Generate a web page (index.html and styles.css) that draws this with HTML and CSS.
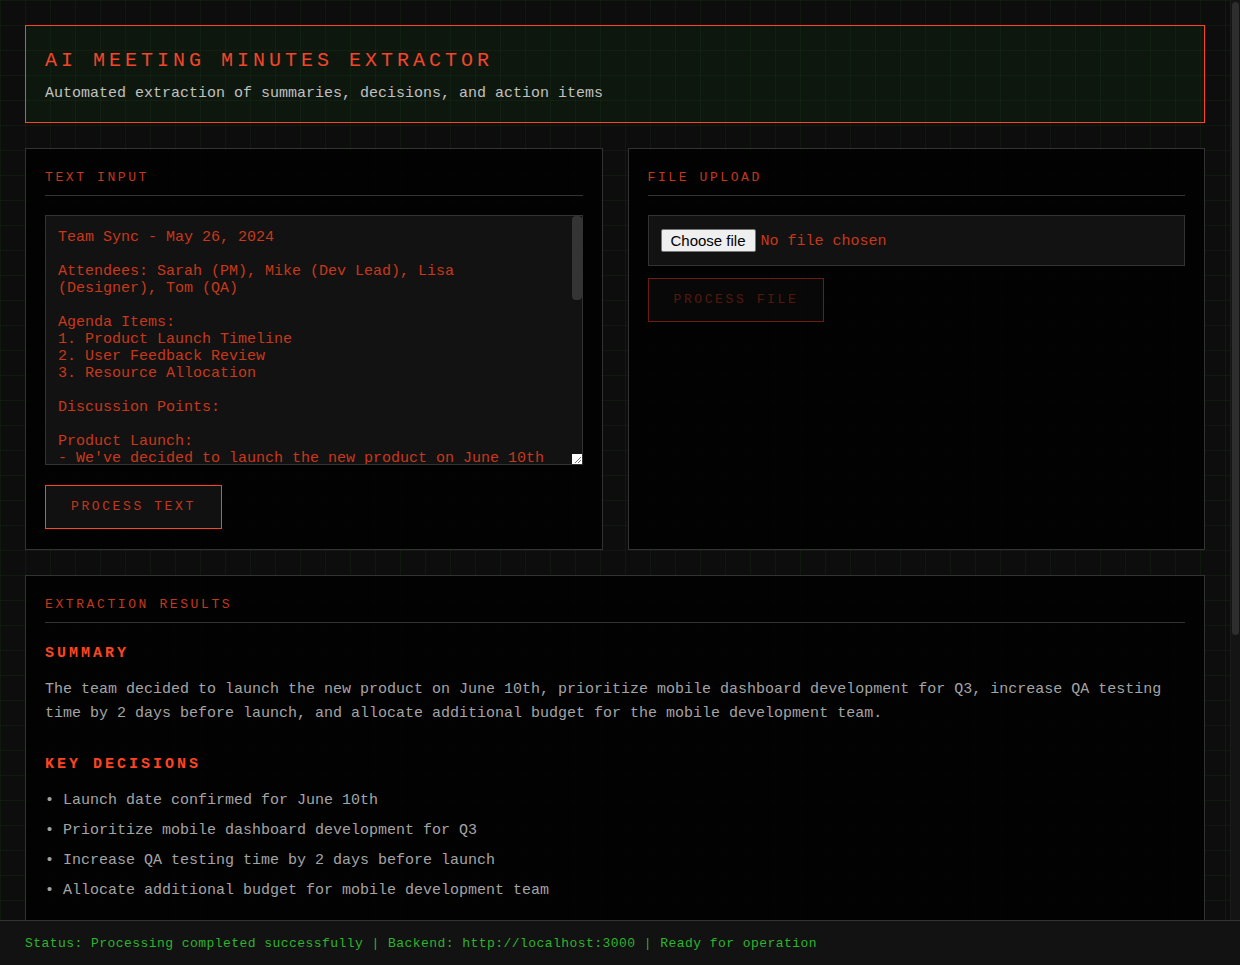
FILE: index.html
```html
<!DOCTYPE html>
<html lang="en">
<head>
<meta charset="utf-8">
<title>AI Meeting Minutes Extractor</title>
<link rel="stylesheet" href="styles.css">
</head>
<body>
<div class="app">
  <div class="viewport">
    <main class="main">
      <header class="hero">
        <h1 class="hero-title">AI MEETING MINUTES EXTRACTOR</h1>
        <p class="hero-sub">Automated extraction of summaries, decisions, and action items</p>
      </header>

      <section class="inputs">
        <div class="panel">
          <h2 class="panel-title">TEXT INPUT</h2>
          <div class="notes-wrap">
            <textarea class="notes" spellcheck="false">Team Sync - May 26, 2024

Attendees: Sarah (PM), Mike (Dev Lead), Lisa (Designer), Tom (QA)

Agenda Items:
1. Product Launch Timeline
2. User Feedback Review
3. Resource Allocation

Discussion Points:

Product Launch:
- We've decided to launch the new product on June 10th
- Mike confirmed the development team can meet this deadline
- Tom raised concerns about the time available for testing
- Decision: Increase QA testing time by 2 days before launch

User Feedback:
- Lisa presented user feedback from the beta program
- Most requested feature is a mobile dashboard
- Decision: Prioritize mobile dashboard development for Q3

Resource Allocation:
- Current team is at full capacity
- Sarah will request more budget for mobile work
- Decision: Allocate additional budget for mobile development team

Action Items:
- Mike to finalize the release build by June 5th
- Tom to prepare the extended test plan by May 30th
- Lisa to create mobile dashboard mockups by June 15th
- Sarah to submit the budget proposal by May 31st

Next Meeting: June 2, 2024</textarea>
            <span class="notes-thumb"></span>
            <span class="notes-corner">
              <svg width="10" height="10" viewBox="0 0 10 10"><path d="M3 9L9 3M6 9L9 6" stroke="#777" stroke-width="1" fill="none"/></svg>
            </span>
          </div>
          <button class="btn" type="button">PROCESS TEXT</button>
        </div>

        <div class="panel">
          <h2 class="panel-title">FILE UPLOAD</h2>
          <div class="file-box">
            <label class="file-choose">Choose file<input class="file-input" type="file"></label>
            <span class="file-name">No file chosen</span>
          </div>
          <button class="btn btn-disabled" type="button" disabled>PROCESS FILE</button>
        </div>
      </section>

      <section class="panel results">
        <h2 class="panel-title">EXTRACTION RESULTS</h2>

        <div class="block">
          <h3 class="block-title">SUMMARY</h3>
          <p class="summary">The team decided to launch the new product on June 10th, prioritize mobile dashboard development for Q3, increase QA testing time by 2 days before launch, and allocate additional budget for the mobile development team.</p>
        </div>

        <div class="block">
          <h3 class="block-title">KEY DECISIONS</h3>
          <ul class="list">
            <li>Launch date confirmed for June 10th</li>
            <li>Prioritize mobile dashboard development for Q3</li>
            <li>Increase QA testing time by 2 days before launch</li>
            <li>Allocate additional budget for mobile development team</li>
          </ul>
        </div>

        <div class="block">
          <h3 class="block-title">ACTION ITEMS</h3>
          <ul class="list actions">
            <li>Finalize the release build<span class="meta">Owner: Mike | Due: June 5th</span></li>
            <li>Prepare the extended test plan<span class="meta">Owner: Tom | Due: May 30th</span></li>
            <li>Create mobile dashboard mockups<span class="meta">Owner: Lisa | Due: June 15th</span></li>
            <li>Submit the budget proposal<span class="meta">Owner: Sarah | Due: May 31st</span></li>
          </ul>
        </div>

        <div class="export">
          <button class="btn" type="button">EXPORT JSON</button>
          <button class="btn" type="button">COPY TEXT</button>
        </div>
      </section>
    </main>
    <div class="scrollbar"><span class="scrollbar-thumb"></span></div>
  </div>

  <footer class="status">Status: Processing completed successfully | Backend: http://localhost:3000 | Ready for operation</footer>
</div>
</body>
</html>
```

FILE: styles.css
```css
* {
  box-sizing: border-box;
}

html, body {
  margin: 0;
  height: 100%;
}

body {
  background-color: #0d0d0d;
  background-image:
    linear-gradient(rgba(40, 110, 40, 0.12) 1px, transparent 1px),
    linear-gradient(90deg, rgba(40, 110, 40, 0.12) 1px, transparent 1px);
  background-size: 25px 25px;
  font-family: "Liberation Mono", "Courier New", monospace;
  color: #a8a8a8;
  overflow: hidden;
}

.app {
  height: 100vh;
  display: flex;
  flex-direction: column;
}

.viewport {
  flex: 1;
  min-height: 0;
  display: flex;
}

.main {
  flex: 1;
  min-width: 0;
  overflow-y: auto;
  scrollbar-width: none;
  padding: 25px;
  display: flex;
  flex-direction: column;
  gap: 25px;
}

.main::-webkit-scrollbar {
  display: none;
}

.scrollbar {
  flex: 0 0 10px;
  padding: 2px 1px 0;
  background: #141414;
  border-left: 1px solid #1c1c1c;
}

.scrollbar-thumb {
  display: block;
  height: 633px;
  border-radius: 4px;
  background: #2e2e2e;
}

.hero {
  border: 1px solid #ff4422;
  background-color: rgba(20, 70, 20, 0.18);
  padding: 23px 19px 20px;
}

.hero-title {
  margin: 0 0 12px;
  font-size: 20px;
  line-height: 24px;
  font-weight: normal;
  letter-spacing: 0.2em;
  color: #f2462a;
}

.hero-sub {
  margin: 0;
  font-size: 15px;
  line-height: 17px;
  color: #c0c0c0;
}

.inputs {
  display: grid;
  grid-template-columns: 1fr 1fr;
  gap: 25px;
}

.panel {
  border: 1px solid #333333;
  background-color: rgba(0, 0, 0, 0.82);
  padding: 21px 19px 20px;
}

.panel-title {
  margin: 0 0 19px;
  padding-bottom: 9px;
  border-bottom: 1px solid #333333;
  font-size: 13px;
  line-height: 16px;
  font-weight: normal;
  letter-spacing: 0.2em;
  color: #c4381c;
}

.notes-wrap {
  position: relative;
  margin: 0 0 20px;
}

.notes {
  display: block;
  width: 100%;
  height: 250px;
  margin: 0;
  padding: 13px 22px 11px 12px;
  border: 1px solid #333333;
  background: #121212;
  color: #c8381a;
  font-family: "Liberation Mono", "Courier New", monospace;
  font-size: 15px;
  line-height: 17px;
  resize: none;
  outline: none;
  overflow-y: auto;
  scrollbar-width: none;
}

.notes::-webkit-scrollbar {
  display: none;
}

.notes-thumb {
  position: absolute;
  top: 1px;
  right: 1px;
  width: 10px;
  height: 84px;
  border-radius: 4px;
  background: #343434;
}

.notes-corner {
  position: absolute;
  right: 1px;
  bottom: 1px;
  width: 10px;
  height: 10px;
  background: #ffffff;
  display: flex;
}

.btn {
  display: inline-block;
  padding: 13px 25px;
  border: 1px solid #ff4422;
  background: #111111;
  color: #c4381c;
  font-family: "Liberation Mono", "Courier New", monospace;
  font-size: 13px;
  line-height: 16px;
  letter-spacing: 0.2em;
  cursor: pointer;
}

.btn-disabled {
  opacity: 0.42;
  cursor: not-allowed;
}

.file-box {
  display: flex;
  align-items: center;
  gap: 5px;
  height: 51px;
  margin-bottom: 12px;
  padding: 0 12px;
  border: 1px solid #333333;
  background: #121212;
}

.file-choose {
  display: inline-block;
  padding: 2px 9px 2px;
  border: 1px solid #767676;
  border-radius: 2px;
  background: #efefef;
  color: #000000;
  font-family: "Liberation Sans", Arial, sans-serif;
  font-size: 15px;
  line-height: 17px;
  cursor: pointer;
}

.file-input {
  display: none;
}

.file-name {
  color: #c8381a;
  font-size: 15px;
  padding-top: 2px;
}

.results .panel-title {
  margin-bottom: 21px;
}

.block {
  margin-bottom: 29px;
}

.block-title {
  margin: 0 0 16px;
  padding-top: 1px;
  font-size: 15px;
  line-height: 17px;
  font-weight: bold;
  letter-spacing: 0.2em;
  color: #ff4422;
}

.summary {
  margin: 0;
  font-size: 15px;
  line-height: 24px;
  color: #a4a4a4;
}

.list {
  list-style: none;
  margin: 0;
  padding: 0;
  font-size: 15px;
  line-height: 24px;
  color: #a4a4a4;
}

.list li {
  margin-bottom: 6px;
}

.list li::before {
  content: "\2022\00A0";
}

.actions li {
  margin-bottom: 12px;
}

.meta {
  display: block;
  padding-left: 18px;
  font-size: 13px;
  line-height: 18px;
  color: #6e6e6e;
}

.export {
  display: flex;
  gap: 15px;
}

.status {
  flex: 0 0 45px;
  display: flex;
  align-items: center;
  padding: 0 25px;
  border-top: 1px solid #333333;
  background: #121212;
  color: #2cb52c;
  font-size: 13px;
  letter-spacing: 0.45px;
}
```
